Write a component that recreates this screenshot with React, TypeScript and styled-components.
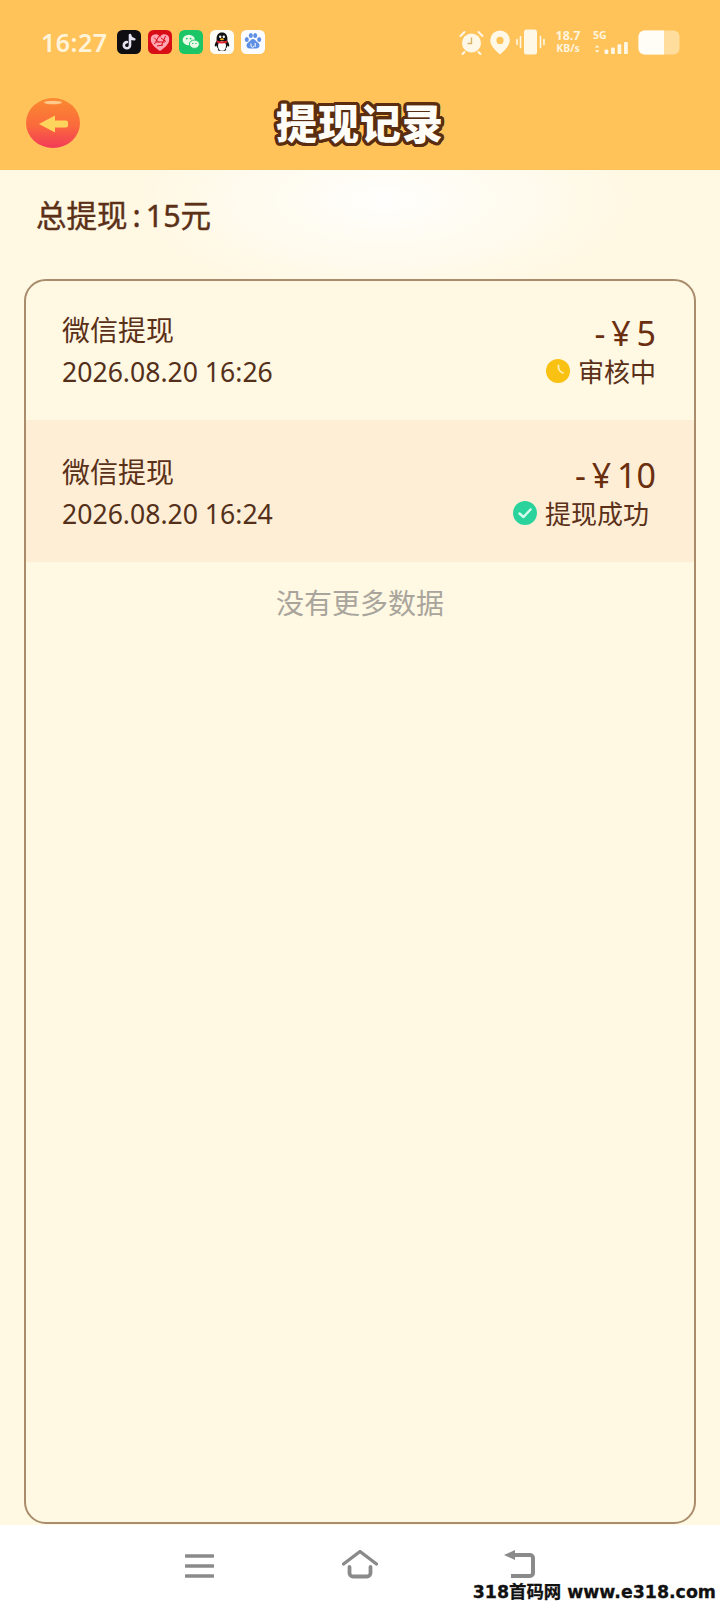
import React from "react";
import styled, { createGlobalStyle } from "styled-components";

const Global = createGlobalStyle`
  html, body { margin: 0; padding: 0; background: #fff; }
  * { box-sizing: border-box; }
  #root { width: 720px; height: 1608px; }
`;

const FONT = `"Noto Sans", "Noto Sans CJK SC", sans-serif`;

const outline = (r: number, color: string) =>
  Array.from({ length: 24 }, (_, i) => {
    const a = (i / 24) * Math.PI * 2;
    return `${(Math.cos(a) * r).toFixed(2)}px ${(Math.sin(a) * r).toFixed(2)}px 0 ${color}`;
  }).join(", ");

const Screen = styled.div`
  position: relative;
  width: 720px;
  height: 1608px;
  display: flex;
  flex-direction: column;
  overflow: hidden;
  font-family: ${FONT};
  background: #fff;
`;

const Header = styled.header`
  height: 170px;
  background: #ffc35a;
  display: flex;
  flex-direction: column;
  flex: none;
`;

const StatusBar = styled.div`
  height: 84px;
  display: flex;
  align-items: center;
  padding: 0 40px 0 41px;
`;

const Clock = styled.span`
  width: 76px;
  font-size: 25px;
  font-weight: 600;
  letter-spacing: 0.5px;
  color: rgba(255, 250, 235, 0.9);
  line-height: 1;
`;

const AppIcons = styled.div`
  display: flex;
  gap: 7px;
`;

const StatusRight = styled.div`
  margin-left: auto;
  display: flex;
  align-items: center;
`;

const Speed = styled.div`
  display: flex;
  flex-direction: column;
  align-items: center;
  width: 30px;
  margin: 0 10px 0 8px;
  color: rgba(255, 250, 235, 0.92);
  font-weight: 700;
  line-height: 13px;
  font-size: 10.5px;
  font-family: "Noto Sans", sans-serif;
`;

const SpeedValue = styled.span`
  font-size: 12.5px;
`;

const Net = styled.div`
  width: 40px;
  height: 26px;
  display: flex;
  flex-direction: column;
  color: rgba(255, 250, 235, 0.92);
  font-family: "Noto Sans", sans-serif;
  font-size: 10.5px;
  font-weight: 700;
  line-height: 13px;
`;

const TitleBar = styled.div`
  position: relative;
  height: 78px;
  display: flex;
  align-items: center;
  justify-content: center;
`;

const BackButton = styled.button`
  position: absolute;
  left: 25px;
  top: 13px;
  width: 56px;
  height: 52px;
  padding: 0;
  border: 0;
  background: none;
`;

const Title = styled.h1`
  margin: 0;
  font-size: 41px;
  line-height: 78px;
  font-weight: 900;
  letter-spacing: 1px;
  color: #fffdf8;
  text-shadow: ${outline(3.2, "#5a2d10")};
`;

const Content = styled.main`
  flex: none;
  height: 1355px;
  display: flex;
  flex-direction: column;
  background:
    radial-gradient(ellipse 250px 100px at 385px 30px, rgba(255, 255, 255, 0.9), rgba(255, 255, 255, 0) 100%),
    #fff8e3;
`;

const Summary = styled.div`
  height: 109px;
  padding: 23px 0 0 36px;
  font-size: 30.5px;
  line-height: 44px;
  font-weight: 400;
  color: #5b3018;
  -webkit-text-stroke: 0.4px #5b3018;
`;

const Colon = styled.span`
  margin: 0 5px;
`;

const Card = styled.section`
  width: 672px;
  height: 1245px;
  margin-left: 24px;
  border: 2px solid #a98c6c;
  border-radius: 22px;
  display: flex;
  flex-direction: column;
  overflow: hidden;
  background: #fff8e3;
`;

const Row = styled.article<{ $alt?: boolean }>`
  flex: none;
  height: ${(p) => (p.$alt ? 142 : 139)}px;
  padding: ${(p) => (p.$alt ? 34 : 31)}px 38px 0 36px;
  display: flex;
  justify-content: space-between;
  background: ${(p) => (p.$alt ? "#fdeed5" : "transparent")};
`;

const RowLeft = styled.div`
  display: flex;
  flex-direction: column;
`;

const RowName = styled.div`
  font-size: 28px;
  line-height: 36px;
  margin-bottom: 6px;
  color: #5b3018;
`;

const RowDate = styled.div`
  font-size: 26.6px;
  line-height: 36px;
  color: #54301a;
`;

const RowRight = styled.div`
  display: flex;
  flex-direction: column;
  align-items: flex-end;
  padding-top: 2px;
`;

const Amount = styled.div`
  font-size: 34px;
  line-height: 39px;
  color: #6a2f10;
  word-spacing: -3px;
`;

const Status = styled.div<{ $inset?: boolean }>`
  display: flex;
  align-items: center;
  gap: 8px;
  height: 36px;
  font-size: 26px;
  color: #5b3018;
  margin-right: ${(p) => (p.$inset ? 7 : 0)}px;
`;

const NoMore = styled.div`
  margin-top: 19px;
  text-align: center;
  font-size: 28px;
  line-height: 44px;
  color: #a9a59c;
`;

const NavBar = styled.nav`
  flex: 1;
  background: #fff;
  display: flex;
  align-items: flex-start;
  padding: 25px 0 0 185px;
`;

const NavSlot = styled.div<{ $w: number; $top?: number }>`
  width: ${(p) => p.$w}px;
  margin-top: ${(p) => p.$top ?? 0}px;
  display: flex;
`;

const Watermark = styled.div`
  position: absolute;
  right: 4px;
  bottom: 3px;
  font-family: "DejaVu Sans", "Noto Sans CJK SC", sans-serif;
  font-weight: 700;
  font-size: 17.4px;
  line-height: 26px;
  color: #111;
  white-space: nowrap;
  -webkit-text-stroke: 0.3px #111;
`;

const AppTile = ({ bg, children }: { bg: string; children: React.ReactNode }) => (
  <svg width="24" height="24" viewBox="0 0 24 24">
    <rect width="24" height="24" rx="5.5" fill={bg} />
    {children}
  </svg>
);

const W = "#eafbe8";

const TikTok = () => (
  <AppTile bg="#0d0d12">
    <path d="M13 5v10.2a3.1 3.1 0 1 1-3.1-3.1M13 5c.3 2.5 1.8 4 4.3 4.3" fill="none" stroke="#e4e2f0" strokeWidth="2.6" strokeLinecap="round" />
  </AppTile>
);
const Heart = () => (
  <AppTile bg="#d90d16">
    <path d="M12 21C6 17 2.8 13.5 2.8 9.5a4.7 4.7 0 0 1 9.2-1.7 4.7 4.7 0 0 1 9.2 1.7C21.2 13.5 18 17 12 21Z" fill="#ffa6b2" />
    <path d="M6 7.5l5 5M11 6l-4.5 8M13 8l5 3.5M17.5 6l-4 9.5M8 12h9M9 16l6-1" stroke="#d90d16" strokeWidth="1" />
  </AppTile>
);
const WeChat = () => (
  <AppTile bg="#1cc565">
    <ellipse cx="9.8" cy="10" rx="6.2" ry="5.2" fill={W} />
    <ellipse cx="15.4" cy="14.2" rx="5" ry="4.2" fill={W} stroke="#1cc565" strokeWidth="1" />
    <circle cx="7.8" cy="8.6" r=".9" fill="#1cc565" />
    <circle cx="11.6" cy="8.6" r=".9" fill="#1cc565" />
    <circle cx="13.8" cy="13.4" r=".7" fill="#1cc565" />
    <circle cx="17" cy="13.4" r=".7" fill="#1cc565" />
  </AppTile>
);
const QQ = () => (
  <AppTile bg="#fbfbf8">
    <path d="M12 2.5c-3.6 0-5.4 2.7-5.4 6.2v2.2c-1.2 1.6-2 3.4-1.8 5 .2 1 1 .5 1.6-.4.5 2 1.5 3 2.2 3.6-1 .4-1.4 1.5.4 1.6h6c1.8-.1 1.4-1.2.4-1.6.7-.6 1.7-1.6 2.2-3.6.6.9 1.4 1.4 1.6.4.2-1.6-.6-3.4-1.8-5V8.7c0-3.5-1.8-6.2-5.4-6.2Z" fill="#111" />
    <ellipse cx="12" cy="16" rx="4" ry="4.8" fill="#fff" />
    <circle cx="10.2" cy="6.8" r="1.2" fill="#fff" />
    <circle cx="13.8" cy="6.8" r="1.2" fill="#fff" />
    <path d="M7 10.6c3 1.3 7 1.3 10 0l.4 1.8c-3.4 1.4-7.4 1.4-10.8 0Z" fill="#e0232a" />
    <ellipse cx="12" cy="9.2" rx="2" ry="1" fill="#f5b31e" />
  </AppTile>
);
const Baidu = () => (
  <AppTile bg="#fbfcff">
    <g fill="#5f8fe4">
      <ellipse cx="5.8" cy="9.5" rx="2" ry="2.5" />
      <ellipse cx="9.8" cy="5.5" rx="2" ry="2.5" />
      <ellipse cx="14.2" cy="5.5" rx="2" ry="2.5" />
      <ellipse cx="18.2" cy="9.5" rx="2" ry="2.5" />
      <path d="M12 9c-2 0-2.8 2-4.4 3.2C6 13.3 5.5 14.3 5.5 15.5c0 1.8 1.5 3 3.3 3h6.4c1.8 0 3.3-1.2 3.3-3 0-1.2-.5-2.2-2.1-3.3C14.8 11 14 9 12 9Z" />
    </g>
    <path d="M10 13.5v2.2a1.5 1.5 0 0 0 3 0M14.2 13v3.8" fill="none" stroke="#fff" strokeWidth="1" />
  </AppTile>
);

const S = "rgba(255,251,238,0.95)";

const Alarm = () => (
  <svg width="25" height="25" viewBox="0 0 25 25" style={{ marginRight: 5 }}>
    <circle cx="12.5" cy="13" r="9.5" fill={S} />
    <path d="M12.5 7.5V13.5H8.5" fill="none" stroke="#d9b26a" strokeWidth="1.4" />
    <path d="M1.5 6 5.5 2M23.5 6 19.5 2M5.5 22 3.5 24M19.5 22 21.5 24" stroke={S} strokeWidth="2" strokeLinecap="round" />
  </svg>
);
const Pin = () => (
  <svg width="22" height="25" viewBox="0 0 22 25" style={{ marginRight: 5 }}>
    <path fillRule="evenodd" d="M11 .5a9.8 9.8 0 0 0-9.8 9.8c0 5.4 5.6 10.8 9.8 14.2 4.2-3.4 9.8-8.8 9.8-14.2A9.8 9.8 0 0 0 11 .5Zm0 6.3a3.6 3.6 0 1 1 0 7.2 3.6 3.6 0 0 1 0-7.2Z" fill={S} />
  </svg>
);
const Vibrate = () => (
  <svg width="29" height="26" viewBox="0 0 29 26">
    <rect x="8" y="0.5" width="13" height="25" rx="2.5" fill={S} />
    <path d="M4.5 7.5v11M1 10.5v5M24.500 7.500v11M28 10.500v5" stroke={S} strokeWidth="1.6" strokeLinecap="round" />
  </svg>
);
const Signal = () => (
  <svg width="38" height="14" viewBox="0 0 38 14">
    <path d="M3 3.5 5.5 6H.5ZM3 11.5.5 9h5Z" fill={S} />
    <rect x="11" y="8" width="4" height="5" rx="1" fill={S} />
    <rect x="18" y="6" width="4" height="7" rx="1" fill={S} />
    <rect x="25" y="2.5" width="4" height="10.5" rx="1" fill={S} />
    <rect x="32" y="0" width="4" height="13" rx="1" fill={S} />
  </svg>
);
const Battery = () => (
  <svg width="42" height="25" viewBox="0 0 42 25" style={{ marginLeft: 5 }}>
    <rect x="0.5" y="0.5" width="41" height="24" rx="6" fill="rgba(255,244,214,0.55)" />
    <path d="M6.5.5H26V24.5H6.5a6 6 0 0 1-6-6V6.5a6 6 0 0 1 6-6Z" fill="#fffdf6" />
  </svg>
);

const BackArrow = () => (
  <svg width="56" height="52" viewBox="0 0 56 52">
    <defs>
      <linearGradient id="ball" x1="0" y1="0" x2="0" y2="1">
        <stop offset="0" stopColor="#fa8a30" />
        <stop offset="0.55" stopColor="#fb6a3c" />
        <stop offset="1" stopColor="#f23a58" />
      </linearGradient>
    </defs>
    <ellipse cx="28" cy="26" rx="27" ry="25" fill="url(#ball)" />
    <ellipse cx="28" cy="5.5" rx="9" ry="1.8" fill="#ffd9a0" opacity="0.8" />
    <path d="M14 27 30 18.5v5h11a2 2 0 0 1 2 2v3a2 2 0 0 1-2 2H30v5Z" fill="#ffd45c" />
  </svg>
);

const Clock16 = () => (
  <svg width="24" height="24" viewBox="0 0 24 24">
    <circle cx="12" cy="12" r="12" fill="#f9c213" />
    <path d="M12.5 6.5c-.5 3.5.5 6 4.5 7.5" fill="none" stroke="#fdf0b8" strokeWidth="1.8" strokeLinecap="round" />
  </svg>
);

const Check = () => (
  <svg width="24" height="24" viewBox="0 0 24 24">
    <circle cx="12" cy="12" r="12" fill="#2bd39c" />
    <path d="M6.5 12.5 10.5 16 17.5 8.5" fill="none" stroke="#d8fbee" strokeWidth="2.4" strokeLinecap="round" strokeLinejoin="round" />
  </svg>
);

const NAV = "#8a8a8a";

const Menu = () => (
  <svg width="29" height="26" viewBox="0 0 29 26">
    <path d="M1 3h27M1 13h27M1 23h27" stroke={NAV} strokeWidth="3.6" strokeLinecap="round" />
  </svg>
);
const Home = () => (
  <svg width="36" height="30" viewBox="0 0 36 30">
    <path d="M1.5 14 18 1.5 34.5 14" fill="none" stroke={NAV} strokeWidth="3.4" strokeLinecap="round" strokeLinejoin="round" />
    <path d="M7.5 17v6a3.5 3.5 0 0 0 3.5 3.5h14a3.5 3.5 0 0 0 3.5-3.5v-6" fill="none" stroke={NAV} strokeWidth="3.8" strokeLinecap="round" />
  </svg>
);
const Back = () => (
  <svg width="32" height="28" viewBox="0 0 32 28">
    <path d="M6 5h20a3 3 0 0 1 3 3v15a3 3 0 0 1-3 3H7" fill="none" stroke={NAV} strokeWidth="4" />
    <path d="M0 5 11 0v10Z" fill={NAV} />
  </svg>
);

export default function App() {
  return (
    <>
      <Global />
      <Screen>
        <Header>
          <StatusBar>
            <Clock>16:27</Clock>
            <AppIcons>
              <TikTok />
              <Heart />
              <WeChat />
              <QQ />
              <Baidu />
            </AppIcons>
            <StatusRight>
              <Alarm />
              <Pin />
              <Vibrate />
              <Speed>
                <SpeedValue>18.7</SpeedValue>
                <span>KB/s</span>
              </Speed>
              <Net>
                <span>5G</span>
                <Signal />
              </Net>
              <Battery />
            </StatusRight>
          </StatusBar>
          <TitleBar>
            <BackButton aria-label="返回">
              <BackArrow />
            </BackButton>
            <Title>提现记录</Title>
          </TitleBar>
        </Header>
        <Content>
          <Summary>
            总提现<Colon>:</Colon>15元
          </Summary>
          <Card>
            <Row>
              <RowLeft>
                <RowName>微信提现</RowName>
                <RowDate>2026.08.20 16:26</RowDate>
              </RowLeft>
              <RowRight>
                <Amount>- ¥ 5</Amount>
                <Status>
                  <Clock16 />
                  审核中
                </Status>
              </RowRight>
            </Row>
            <Row $alt>
              <RowLeft>
                <RowName>微信提现</RowName>
                <RowDate>2026.08.20 16:24</RowDate>
              </RowLeft>
              <RowRight>
                <Amount>- ¥ 10</Amount>
                <Status $inset>
                  <Check />
                  提现成功
                </Status>
              </RowRight>
            </Row>
            <NoMore>没有更多数据</NoMore>
          </Card>
        </Content>
        <NavBar>
          <NavSlot $w={157} $top={3}>
            <Menu />
          </NavSlot>
          <NavSlot $w={162}>
            <Home />
          </NavSlot>
          <NavSlot $w={32}>
            <Back />
          </NavSlot>
        </NavBar>
        <Watermark>318首码网 www.e318.com</Watermark>
      </Screen>
    </>
  );
}
